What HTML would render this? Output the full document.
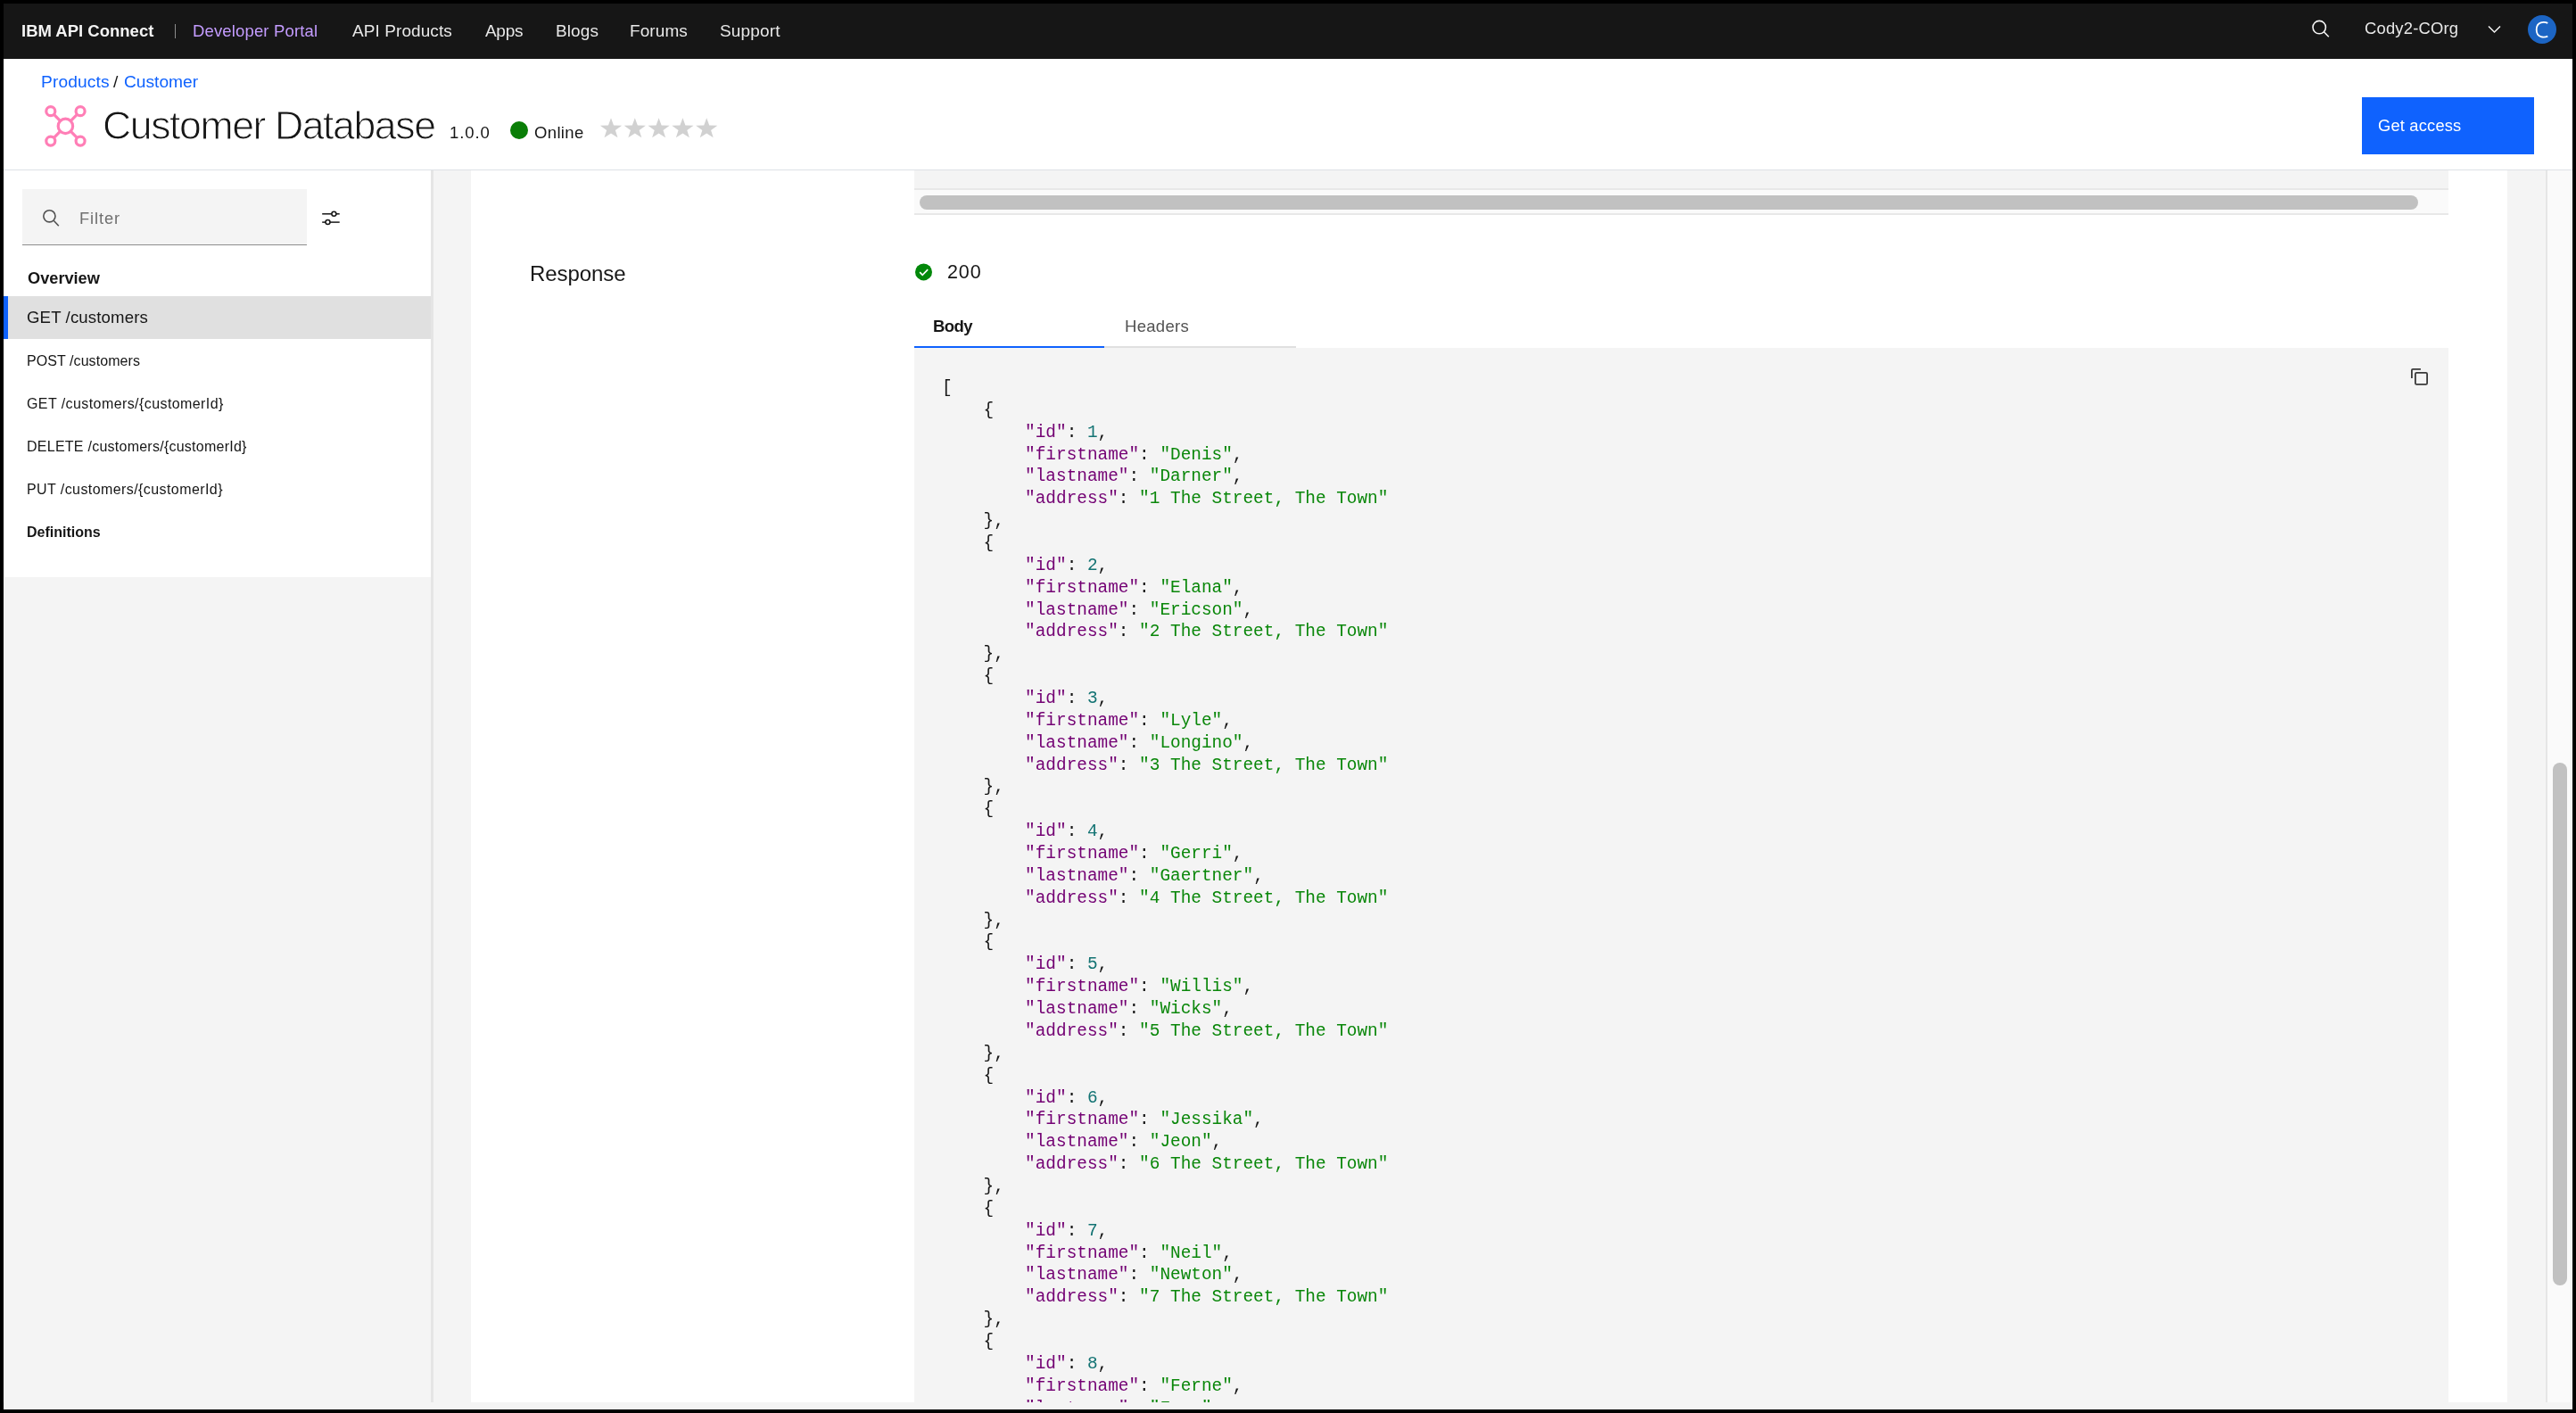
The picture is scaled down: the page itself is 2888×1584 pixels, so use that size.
<!DOCTYPE html><html><head><meta charset="utf-8"><style>
html,body{margin:0;padding:0;width:2888px;height:1584px;overflow:hidden;background:#000}
.t{position:absolute;white-space:nowrap;will-change:transform}
.r{position:absolute}
</style></head><body>
<div class="r" style="left:4px;top:4px;width:2880px;height:1576px;background:#fff"></div>

<div class="r" style="left:4px;top:4px;width:2880px;height:61.5px;background:#161616"></div>
<div class="t" style="left:24.10px;top:25.54px;font-size:18.5px;line-height:18.5px;color:#f4f4f4;font-weight:700;letter-spacing:0.0px;font-family:'Liberation Sans',sans-serif;">IBM API Connect</div>
<div class="r" style="left:195.5px;top:27px;width:1.5px;height:16px;background:#8d8d8d"></div>
<div class="t" style="left:216.10px;top:25.54px;font-size:18.5px;line-height:18.5px;color:#c49cff;font-weight:400;letter-spacing:0.15px;font-family:'Liberation Sans',sans-serif;">Developer Portal</div>
<div class="t" style="left:395.45px;top:25.11px;font-size:19px;line-height:19px;color:#e8e8e8;font-weight:400;letter-spacing:0.082px;font-family:'Liberation Sans',sans-serif;">API Products</div>
<div class="t" style="left:544.40px;top:25.11px;font-size:19px;line-height:19px;color:#e8e8e8;font-weight:400;letter-spacing:-0.3px;font-family:'Liberation Sans',sans-serif;">Apps</div>
<div class="t" style="left:622.55px;top:25.11px;font-size:19px;line-height:19px;color:#e8e8e8;font-weight:400;letter-spacing:0.115px;font-family:'Liberation Sans',sans-serif;">Blogs</div>
<div class="t" style="left:706.10px;top:25.11px;font-size:19px;line-height:19px;color:#e8e8e8;font-weight:400;letter-spacing:0.09px;font-family:'Liberation Sans',sans-serif;">Forums</div>
<div class="t" style="left:806.60px;top:25.11px;font-size:19px;line-height:19px;color:#e8e8e8;font-weight:400;letter-spacing:0.15px;font-family:'Liberation Sans',sans-serif;">Support</div>
<svg class="r" style="left:2590px;top:20px" width="24" height="24" viewBox="0 0 24 24"><circle cx="10.2" cy="10.6" r="7.2" fill="none" stroke="#f4f4f4" stroke-width="1.6"/><line x1="15.4" y1="15.8" x2="20.8" y2="21.2" stroke="#f4f4f4" stroke-width="1.6"/></svg>
<div class="t" style="left:2650.60px;top:23.22px;font-size:18.4px;line-height:18.4px;color:#e8e8e8;font-weight:400;letter-spacing:0.2px;font-family:'Liberation Sans',sans-serif;">Cody2-COrg</div>
<svg class="r" style="left:2786px;top:24px" width="22" height="18" viewBox="0 0 22 18"><polyline points="4,5.5 10.5,12 17,5.5" fill="none" stroke="#f4f4f4" stroke-width="1.5"/></svg>
<div class="r" style="left:2834px;top:17px;width:32px;height:32px;border-radius:50%;background:#1c65c4"></div>
<svg class="r" style="left:2834px;top:17px" width="32" height="32" viewBox="2834 17 32 32"><path d="M2856.3,25.9 C2852.6,24.2 2843.7,23.6 2843.7,33.25 C2843.7,42.9 2852.6,42.3 2856.3,40.6" fill="none" stroke="#fff" stroke-width="1.8"/></svg>
<div class="t" style="left:46.10px;top:81.54px;font-size:19.2px;line-height:19.2px;color:#0f62fe;font-weight:400;letter-spacing:0.129px;font-family:'Liberation Sans',sans-serif;">Products</div>
<div class="t" style="left:127.40px;top:81.54px;font-size:19.2px;line-height:19.2px;color:#161616;font-weight:400;letter-spacing:0px;font-family:'Liberation Sans',sans-serif;">/</div>
<div class="t" style="left:139.10px;top:81.54px;font-size:19.2px;line-height:19.2px;color:#0f62fe;font-weight:400;letter-spacing:-0.001px;font-family:'Liberation Sans',sans-serif;">Customer</div>
<svg class="r" style="left:44px;top:112px" width="60" height="60" viewBox="44 112 60 60">
<g fill="none" stroke="#ff7eb6" stroke-width="3.2">
<circle cx="73.4" cy="141.4" r="8.2"/>
<circle cx="56.8" cy="124.7" r="5"/><circle cx="90.1" cy="124.7" r="5"/>
<circle cx="56.8" cy="158.1" r="5"/><circle cx="90.1" cy="158.1" r="5"/>
<line x1="60.3" y1="128.2" x2="67.6" y2="135.6"/><line x1="86.6" y1="128.2" x2="79.2" y2="135.6"/>
<line x1="60.3" y1="154.6" x2="67.6" y2="147.2"/><line x1="86.6" y1="154.6" x2="79.2" y2="147.2"/>
</g></svg>
<div class="t" style="left:115.10px;top:119.24px;font-size:44.6px;line-height:44.6px;color:#161616;font-weight:400;letter-spacing:-1.415px;font-family:'Liberation Sans',sans-serif;-webkit-text-stroke:1.0px #fff;">Customer Database</div>
<div class="t" style="left:503.50px;top:140.34px;font-size:18.5px;line-height:18.5px;color:#161616;font-weight:400;letter-spacing:0.9px;font-family:'Liberation Sans',sans-serif;">1.0.0</div>
<div class="r" style="left:572px;top:136px;width:20px;height:20px;border-radius:50%;background:#0a7e07"></div>
<div class="t" style="left:598.50px;top:140.34px;font-size:18.5px;line-height:18.5px;color:#161616;font-weight:400;letter-spacing:0.36px;font-family:'Liberation Sans',sans-serif;">Online</div>
<svg class="r" style="left:0;top:0" width="900" height="190"><polygon points="685.00,132.30 688.01,140.54 697.13,140.73 689.87,146.01 692.49,154.37 685.00,149.40 677.51,154.37 680.13,146.01 672.87,140.73 681.99,140.54" fill="#d1d1d1"/><polygon points="711.80,132.30 714.81,140.54 723.93,140.73 716.67,146.01 719.29,154.37 711.80,149.40 704.31,154.37 706.93,146.01 699.67,140.73 708.79,140.54" fill="#d1d1d1"/><polygon points="738.60,132.30 741.61,140.54 750.73,140.73 743.47,146.01 746.09,154.37 738.60,149.40 731.11,154.37 733.73,146.01 726.47,140.73 735.59,140.54" fill="#d1d1d1"/><polygon points="765.40,132.30 768.41,140.54 777.53,140.73 770.27,146.01 772.89,154.37 765.40,149.40 757.91,154.37 760.53,146.01 753.27,140.73 762.39,140.54" fill="#d1d1d1"/><polygon points="792.20,132.30 795.21,140.54 804.33,140.73 797.07,146.01 799.69,154.37 792.20,149.40 784.71,154.37 787.33,146.01 780.07,140.73 789.19,140.54" fill="#d1d1d1"/></svg>
<div class="r" style="left:2648px;top:109px;width:193px;height:64px;background:#0f62fe"></div>
<div class="t" style="left:2666.00px;top:131.71px;font-size:18.3px;line-height:18.3px;color:#ffffff;font-weight:400;letter-spacing:0.2px;font-family:'Liberation Sans',sans-serif;">Get access</div>
<div class="r" style="left:4px;top:190px;width:2880px;height:1px;background:#dde1e6"></div>
<div class="r" style="left:5px;top:191px;width:478px;height:1381px;background:#f4f4f4"></div>
<div class="r" style="left:5px;top:191px;width:478px;height:455.5px;background:#ffffff"></div>
<div class="r" style="left:483px;top:191px;width:3px;height:1381px;background:#e5e5e5"></div>
<div class="r" style="left:486px;top:191px;width:42px;height:1381px;background:#f4f4f4"></div>
<div class="r" style="left:25px;top:212px;width:319px;height:62px;background:#f4f4f4;border-bottom:1px solid #8d8d8d"></div>
<svg class="r" style="left:44px;top:230px" width="26" height="26" viewBox="44 230 26 26"><circle cx="55.4" cy="242.3" r="6.6" fill="none" stroke="#525252" stroke-width="1.6"/><line x1="60.2" y1="247.3" x2="65.8" y2="253.3" stroke="#525252" stroke-width="1.6"/></svg>
<div class="t" style="left:89.10px;top:236.31px;font-size:18.3px;line-height:18.3px;color:#6f6f6f;font-weight:400;letter-spacing:0.9px;font-family:'Liberation Sans',sans-serif;">Filter</div>
<svg class="r" style="left:356px;top:230px" width="30" height="26" viewBox="356 230 30 26"><g fill="none" stroke="#161616" stroke-width="1.5"><line x1="361.2" y1="239.8" x2="371.9" y2="239.8"/><line x1="376.9" y1="239.8" x2="380.7" y2="239.8"/><circle cx="374.4" cy="239.8" r="2.5"/><line x1="361.2" y1="249.1" x2="365.0" y2="249.1"/><line x1="370.0" y1="249.1" x2="380.7" y2="249.1"/><circle cx="367.5" cy="249.1" r="2.5"/></g></svg>
<div class="t" style="left:30.50px;top:302.59px;font-size:18.2px;line-height:18.2px;color:#161616;font-weight:700;letter-spacing:0.0px;font-family:'Liberation Sans',sans-serif;">Overview</div>
<div class="r" style="left:4px;top:332px;width:479px;height:48px;background:#e0e0e0"></div>
<div class="r" style="left:4px;top:332px;width:5px;height:48px;background:#0f62fe"></div>
<div class="t" style="left:29.60px;top:346.95px;font-size:18.6px;line-height:18.6px;color:#161616;font-weight:400;letter-spacing:0.139px;font-family:'Liberation Sans',sans-serif;">GET /customers</div>
<div class="t" style="left:29.60px;top:396.75px;font-size:16.0px;line-height:16.0px;color:#161616;font-weight:400;letter-spacing:0.068px;font-family:'Liberation Sans',sans-serif;">POST /customers</div>
<div class="t" style="left:29.60px;top:445.15px;font-size:16.0px;line-height:16.0px;color:#161616;font-weight:400;letter-spacing:0.416px;font-family:'Liberation Sans',sans-serif;">GET /customers/{customerId}</div>
<div class="t" style="left:29.60px;top:492.65px;font-size:16.0px;line-height:16.0px;color:#161616;font-weight:400;letter-spacing:0.25px;font-family:'Liberation Sans',sans-serif;">DELETE /customers/{customerId}</div>
<div class="t" style="left:29.60px;top:540.85px;font-size:16.0px;line-height:16.0px;color:#161616;font-weight:400;letter-spacing:0.416px;font-family:'Liberation Sans',sans-serif;">PUT /customers/{customerId}</div>
<div class="t" style="left:29.60px;top:588.75px;font-size:16.0px;line-height:16.0px;color:#161616;font-weight:700;letter-spacing:0.0px;font-family:'Liberation Sans',sans-serif;">Definitions</div>
<div class="r" style="left:2811px;top:191px;width:43px;height:1381px;background:#f4f4f4"></div>
<div class="r" style="left:2854px;top:191px;width:2px;height:1381px;background:#e5e5e5"></div>
<div class="r" style="left:2856px;top:191px;width:26px;height:1381px;background:#fafafa"></div>
<div class="r" style="left:2882px;top:191px;width:1px;height:1381px;background:#efefef"></div>
<div class="r" style="left:2862px;top:855px;width:16px;height:586px;border-radius:8px;background:#c1c1c1"></div>
<div class="r" style="left:4px;top:1572px;width:2880px;height:7px;background:#f4f4f4"></div>
<div class="r" style="left:1025px;top:191px;width:1720px;height:20px;background:#f4f4f4"></div>
<div class="r" style="left:1025px;top:211px;width:1720px;height:2px;background:#e8e8e8"></div>
<div class="r" style="left:1025px;top:213px;width:1720px;height:26px;background:#fafafa"></div>
<div class="r" style="left:1025px;top:239px;width:1720px;height:2px;background:#e8e8e8"></div>
<div class="r" style="left:1031px;top:219px;width:1680px;height:16px;border-radius:8px;background:#c1c1c1"></div>
<div class="t" style="left:594.10px;top:294.88px;font-size:24.0px;line-height:24.0px;color:#161616;font-weight:400;letter-spacing:-0.07px;font-family:'Liberation Sans',sans-serif;">Response</div>
<svg class="r" style="left:1020px;top:290px" width="30" height="30" viewBox="1020 290 30 30"><circle cx="1035.5" cy="304.9" r="9.5" fill="#02880a"/><polyline points="1031.2,305.2 1034.2,308.3 1040.2,302.2" fill="none" stroke="#fff" stroke-width="1.7"/></svg>
<div class="t" style="left:1062.00px;top:294.60px;font-size:21.5px;line-height:21.5px;color:#161616;font-weight:400;letter-spacing:0.9px;font-family:'Liberation Sans',sans-serif;">200</div>
<div class="t" style="left:1046.00px;top:356.94px;font-size:18.5px;line-height:18.5px;color:#161616;font-weight:700;letter-spacing:-0.6px;font-family:'Liberation Sans',sans-serif;">Body</div>
<div class="t" style="left:1261.00px;top:356.94px;font-size:18.5px;line-height:18.5px;color:#525252;font-weight:400;letter-spacing:0.3px;font-family:'Liberation Sans',sans-serif;">Headers</div>
<div class="r" style="left:1025px;top:388px;width:213px;height:2px;background:#0f62fe"></div>
<div class="r" style="left:1238px;top:388px;width:215px;height:2px;background:#e0e0e0"></div>
<div class="r" style="left:1025px;top:390px;width:1720px;height:1182px;background:#f4f4f4;overflow:hidden">
<pre style="position:absolute;left:30.80px;top:32.60px;margin:0;will-change:transform;font-family:'Liberation Mono',monospace;font-size:19.4px;line-height:24.867px;color:#161616">[
    {
        <span style="color:#730073">"id"</span>: <span style="color:#137373">1</span>,
        <span style="color:#730073">"firstname"</span>: <span style="color:#0a870a">"Denis"</span>,
        <span style="color:#730073">"lastname"</span>: <span style="color:#0a870a">"Darner"</span>,
        <span style="color:#730073">"address"</span>: <span style="color:#0a870a">"1 The Street, The Town"</span>
    },
    {
        <span style="color:#730073">"id"</span>: <span style="color:#137373">2</span>,
        <span style="color:#730073">"firstname"</span>: <span style="color:#0a870a">"Elana"</span>,
        <span style="color:#730073">"lastname"</span>: <span style="color:#0a870a">"Ericson"</span>,
        <span style="color:#730073">"address"</span>: <span style="color:#0a870a">"2 The Street, The Town"</span>
    },
    {
        <span style="color:#730073">"id"</span>: <span style="color:#137373">3</span>,
        <span style="color:#730073">"firstname"</span>: <span style="color:#0a870a">"Lyle"</span>,
        <span style="color:#730073">"lastname"</span>: <span style="color:#0a870a">"Longino"</span>,
        <span style="color:#730073">"address"</span>: <span style="color:#0a870a">"3 The Street, The Town"</span>
    },
    {
        <span style="color:#730073">"id"</span>: <span style="color:#137373">4</span>,
        <span style="color:#730073">"firstname"</span>: <span style="color:#0a870a">"Gerri"</span>,
        <span style="color:#730073">"lastname"</span>: <span style="color:#0a870a">"Gaertner"</span>,
        <span style="color:#730073">"address"</span>: <span style="color:#0a870a">"4 The Street, The Town"</span>
    },
    {
        <span style="color:#730073">"id"</span>: <span style="color:#137373">5</span>,
        <span style="color:#730073">"firstname"</span>: <span style="color:#0a870a">"Willis"</span>,
        <span style="color:#730073">"lastname"</span>: <span style="color:#0a870a">"Wicks"</span>,
        <span style="color:#730073">"address"</span>: <span style="color:#0a870a">"5 The Street, The Town"</span>
    },
    {
        <span style="color:#730073">"id"</span>: <span style="color:#137373">6</span>,
        <span style="color:#730073">"firstname"</span>: <span style="color:#0a870a">"Jessika"</span>,
        <span style="color:#730073">"lastname"</span>: <span style="color:#0a870a">"Jeon"</span>,
        <span style="color:#730073">"address"</span>: <span style="color:#0a870a">"6 The Street, The Town"</span>
    },
    {
        <span style="color:#730073">"id"</span>: <span style="color:#137373">7</span>,
        <span style="color:#730073">"firstname"</span>: <span style="color:#0a870a">"Neil"</span>,
        <span style="color:#730073">"lastname"</span>: <span style="color:#0a870a">"Newton"</span>,
        <span style="color:#730073">"address"</span>: <span style="color:#0a870a">"7 The Street, The Town"</span>
    },
    {
        <span style="color:#730073">"id"</span>: <span style="color:#137373">8</span>,
        <span style="color:#730073">"firstname"</span>: <span style="color:#0a870a">"Ferne"</span>,
        <span style="color:#730073">"lastname"</span>: <span style="color:#0a870a">"Foss"</span>,
        <span style="color:#730073">"address"</span>: <span style="color:#0a870a">"8 The Street, The Town"</span>
    },</pre>
</div>
<svg class="r" style="left:2698px;top:408px" width="30" height="30" viewBox="2698 408 30 30"><g fill="none" stroke="#393939" stroke-width="1.8"><path d="M2703.9,423.9 V415 a1.2,1.2 0 0 1 1.2,-1.2 H2713.9"/><rect x="2707.9" y="417.9" width="13.2" height="13" rx="1.4"/></g></svg>
</body></html>
